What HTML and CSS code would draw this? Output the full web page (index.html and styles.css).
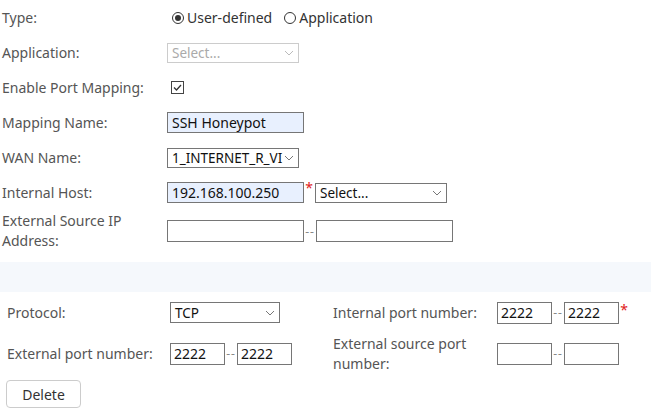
FILE: index.html
```html
<!DOCTYPE html>
<html>
<head>
<meta charset="utf-8">
<link rel="stylesheet" href="styles.css">
</head>
<body>
<div class="form">
  <div class="row">
    <div class="label">Type:</div>
    <div class="field">
      <span class="radio checked"></span><span class="opt">User-defined</span>
      <span class="radio radio2"></span><span class="opt">Application</span>
    </div>
  </div>
  <div class="row">
    <div class="label">Application:</div>
    <div class="field">
      <div class="select disabled w132"><span>Select...</span><svg class="chev" width="10" height="6" viewBox="0 0 10 6"><path d="M1 1l4 4 4-4" fill="none" stroke="#bbb" stroke-width="1"/></svg></div>
    </div>
  </div>
  <div class="row">
    <div class="label">Enable Port Mapping:</div>
    <div class="field">
      <span class="checkbox"><svg width="11" height="11" viewBox="0 0 11 11"><path d="M2 5.5l2.5 2.5 4.5-5" fill="none" stroke="#333" stroke-width="1.3"/></svg></span>
    </div>
  </div>
  <div class="row">
    <div class="label">Mapping Name:</div>
    <div class="field"><div class="input filled w137">SSH Honeypot</div></div>
  </div>
  <div class="row">
    <div class="label">WAN Name:</div>
    <div class="field">
      <div class="select w132"><span>1_INTERNET_R_VI</span><svg class="chev" width="10" height="6" viewBox="0 0 10 6"><path d="M1 1l4 4 4-4" fill="none" stroke="#777" stroke-width="1"/></svg></div>
    </div>
  </div>
  <div class="row">
    <div class="label">Internal Host:</div>
    <div class="field">
      <div class="input filled w137">192.168.100.250</div><span class="req">*</span>
      <div class="select w132 ml"><span>Select...</span><svg class="chev" width="10" height="6" viewBox="0 0 10 6"><path d="M1 1l4 4 4-4" fill="none" stroke="#777" stroke-width="1"/></svg></div>
    </div>
  </div>
  <div class="row tall">
    <div class="label two">External Source IP<br>Address:</div>
    <div class="field">
      <div class="input w137 h22"></div><span class="sep">--</span><div class="input w137 h22"></div>
    </div>
  </div>
</div>
<div class="band"></div>
<div class="grid">
  <div class="label2">Protocol:</div>
  <div class="field">
    <div class="select w110"><span>TCP</span><svg class="chev" width="10" height="6" viewBox="0 0 10 6"><path d="M1 1l4 4 4-4" fill="none" stroke="#777" stroke-width="1"/></svg></div>
  </div>
  <div class="label2">Internal port number:</div>
  <div class="field">
    <div class="input port">2222</div><span class="sep">--</span><div class="input port">2222</div><span class="req req2">*</span>
  </div>
  <div class="label2">External port number:</div>
  <div class="field">
    <div class="input port">2222</div><span class="sep">--</span><div class="input port">2222</div>
  </div>
  <div class="label2 two">External source port<br>number:</div>
  <div class="field">
    <div class="input port"></div><span class="sep">--</span><div class="input port"></div>
  </div>
</div>
<div class="actions">
  <button class="btn">Delete</button>
</div>
</body>
</html>
```
FILE: styles.css
```css
html, body {
  margin: 0;
  padding: 0;
  background: #fff;
}
body {
  font-family: "Noto Sans", "Open Sans", sans-serif;
  font-size: 14px;
  color: #555;
}
.form {
  padding-left: 2px;
}
.row {
  display: flex;
  align-items: center;
  height: 35px;
}
.row.tall {
  height: 44px;
  margin-top: -1px;
}
.label {
  width: 165px;
  flex: none;
  line-height: 20px;
}
.field {
  display: flex;
  align-items: center;
}
.radio {
  width: 12px;
  height: 12px;
  border: 1px solid #333;
  border-radius: 50%;
  box-sizing: border-box;
  margin-left: 5px;
  margin-right: 3px;
  position: relative;
}
.radio.checked::after {
  content: "";
  position: absolute;
  left: 2px;
  top: 2px;
  width: 6px;
  height: 6px;
  border-radius: 50%;
  background: #333;
}
.radio2 {
  margin-left: 12px;
}
.opt {
  color: #333;
  font-size: 14px;
}
.select {
  display: flex;
  align-items: center;
  justify-content: space-between;
  box-sizing: border-box;
  height: 20px;
  border: 1px solid #767676;
  padding: 0 4px 0 4px;
  color: #111;
  font-size: 13.5px;
  background: #fff;
  white-space: nowrap;
  overflow: hidden;
}
.select.disabled {
  border-color: #ccc;
  color: #aaa;
}
.chev {
  flex: none;
}
.w132 { width: 132px; }
.w110 { width: 110px; }
.ml { margin-left: 1px; }
.checkbox {
  width: 13px;
  height: 13px;
  box-sizing: border-box;
  border: 1px solid #444;
  margin-left: 4px;
  display: flex;
  align-items: center;
  justify-content: center;
}
.input {
  box-sizing: border-box;
  height: 21px;
  border: 1px solid #767676;
  background: #fff;
  color: #111;
  font-size: 14px;
  line-height: 19px;
  padding-left: 4px;
  white-space: nowrap;
}
.input.filled {
  background: #e8f0fe;
}
.w137 { width: 137px; }
.h22 { height: 22px; }
.req {
  color: #e02020;
  width: 10px;
  text-align: center;
  align-self: flex-start;
  margin-top: -4px;
  font-size: 14px;
}
.sep {
  color: #888;
  width: 12px;
  text-align: center;
  font-size: 12px;
  letter-spacing: 1px;
}
.band {
  height: 30px;
  margin-top: 9px;
  background: #f5f8fc;
}
.grid {
  display: grid;
  grid-template-columns: 163px 163px 164px auto;
  grid-auto-rows: 41px;
  align-items: center;
  padding-left: 7px;
}
.label2 {
  line-height: 20px;
}
.grid .field .select {
  height: 21px;
}
.port {
  width: 55px;
  height: 22px;
  padding-left: 3px;
}
.req2 {
  margin-top: -2px;
}
.actions {
  padding: 6px 0 0 6px;
}
.btn {
  font-family: inherit;
  font-size: 14px;
  color: #333;
  background: #fff;
  border: 1px solid #ccc;
  border-radius: 4px;
  width: 75px;
  height: 28px;
  padding: 0;
}
```
